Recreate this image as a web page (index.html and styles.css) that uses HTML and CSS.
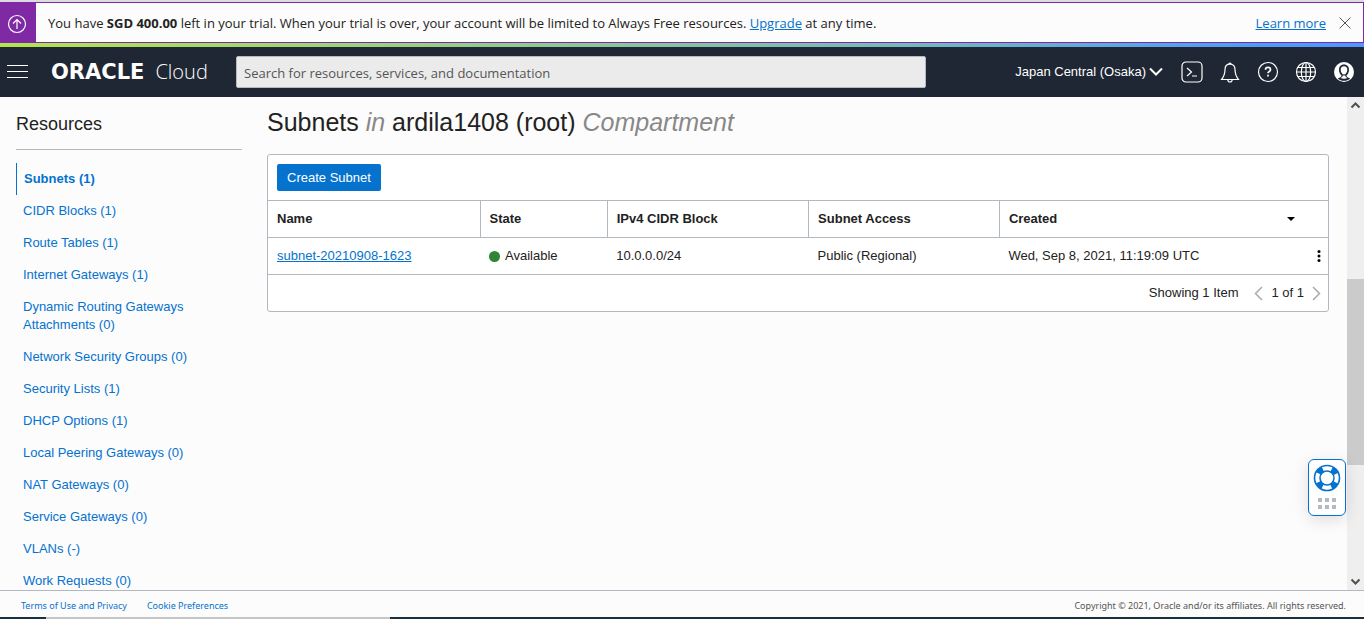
FILE: index.html
```html
<!DOCTYPE html>
<html lang="en">
<head>
<meta charset="utf-8">
<meta name="viewport" content="width=device-width, initial-scale=1">
<title>Subnets - Oracle Cloud</title>
<link rel="stylesheet" href="styles.css">
</head>
<body>
<section class="banner" aria-label="Trial notice">
  <div class="banner-icon">
    <svg width="20" height="20" viewBox="0 0 20 20" fill="none" stroke="currentColor" stroke-width="1.2"><circle cx="10" cy="10" r="8.5"/><path d="M10 15V5.5M6 9.5l4-4 4 4"/></svg>
  </div>
  <p class="banner-text">You have <strong>SGD 400.00</strong> left in your trial. When your trial is over, your account will be limited to Always Free resources. <a href="#">Upgrade</a> at any time.</p>
  <a class="banner-more" href="#">Learn more</a>
  <button class="icon-button close" type="button" aria-label="Close">
    <svg width="12" height="12" viewBox="0 0 12 12" fill="none" stroke="currentColor"><path d="M.5.5l11 11M11.5.5l-11 11"/></svg>
  </button>
</section>

<header class="header">
  <button class="icon-button menu" type="button" aria-label="Menu">
    <svg width="22" height="14" viewBox="0 0 22 14" fill="none" stroke="currentColor"><path d="M0 .5h21M0 6.500h21M0 12.500h21"/></svg>
  </button>
  <a class="logo" href="#"><span class="logo-brand">ORACLE</span><span class="logo-product">Cloud</span></a>
  <input class="search" type="search" placeholder="Search for resources, services, and documentation" aria-label="Search">
  <nav class="tools" aria-label="Tools">
    <button class="region" type="button">Japan Central (Osaka)
      <svg width="14" height="10" viewBox="0 0 14 10" fill="none" stroke="currentColor" stroke-width="2"><path d="M1 1.5l6 6 6-6"/></svg>
    </button>
    <button class="icon-button" type="button" aria-label="Cloud Shell">
      <svg width="22" height="22" viewBox="0 0 22 22" fill="none" stroke="currentColor" stroke-width="1.2"><rect x="1" y="1" width="20" height="20" rx="4"/><path d="M6 7l4.5 4L6 15M11 15h5"/></svg>
    </button>
    <button class="icon-button" type="button" aria-label="Announcements">
      <svg width="22" height="22" viewBox="0 0 22 22" fill="none" stroke="currentColor" stroke-width="1.2"><path d="M9.800 3.200a1.200 1.200 0 1 1 2.400 0M11 3.200C7.500 3.200 6 5.500 6 8.500c0 5-1.500 7.500-3.500 10h17c-2-2.500-3.500-5-3.500-10 0-3-1.500-5.300-5-5.300zM8.800 18.500c0 3.300 4.400 3.300 4.400 0"/></svg>
    </button>
    <button class="icon-button" type="button" aria-label="Help">
      <svg width="22" height="22" viewBox="0 0 22 22" fill="none" stroke="currentColor" stroke-width="1.2"><circle cx="11" cy="11" r="9.500"/><path stroke-width="1.700" d="M8.500 8.700c0-3 5-3 5 0 0 1.700-2.500 1.800-2.500 3.500M11 13.800v1.800"/></svg>
    </button>
    <button class="icon-button" type="button" aria-label="Language">
      <svg width="22" height="22" viewBox="0 0 22 22" fill="none" stroke="currentColor" stroke-width="1.2"><circle cx="11" cy="11" r="9.500"/><ellipse cx="11" cy="11" rx="4.700" ry="9.500"/><path d="M11 1.500v19M1.500 11h19M3 6.500h16M3 15.500h16"/></svg>
    </button>
    <button class="icon-button" type="button" aria-label="Profile">
      <svg width="22" height="22" viewBox="0 0 22 22"><circle cx="11" cy="11" r="10" fill="#fff"/><path fill="#1e2733" d="M11 3.500c-3.400 0-5 2.300-5 5.200 0 2.500 1 4.600 2.600 5.700-.2 1.600-1.900 2.200-3.900 3 3.200 3.200 9.400 3.200 12.600 0-2-.8-3.700-1.400-3.900-3 1.600-1.100 2.600-3.200 2.600-5.700 0-2.900-1.600-5.200-5-5.200z"/><path fill="#fff" d="M11 5.300c2.300 0 3.300 1.400 3.300 3.500 0 2.500-1.500 4.800-3.300 4.800s-3.300-2.300-3.300-4.800c0-2.100 1-3.500 3.300-3.500zM9.800 14.500h2.400c.2 1.200 1 2 2.300 2.600-2 1-5 1-7 0 1.300-.6 2.100-1.400 2.300-2.600z"/></svg>
    </button>
  </nav>
</header>

<div class="workspace">
  <aside class="sidebar">
    <h2>Resources</h2>
    <ul class="resources">
      <li class="active"><a href="#">Subnets (1)</a></li>
      <li><a href="#">CIDR Blocks (1)</a></li>
      <li><a href="#">Route Tables (1)</a></li>
      <li><a href="#">Internet Gateways (1)</a></li>
      <li><a href="#">Dynamic Routing Gateways Attachments (0)</a></li>
      <li><a href="#">Network Security Groups (0)</a></li>
      <li><a href="#">Security Lists (1)</a></li>
      <li><a href="#">DHCP Options (1)</a></li>
      <li><a href="#">Local Peering Gateways (0)</a></li>
      <li><a href="#">NAT Gateways (0)</a></li>
      <li><a href="#">Service Gateways (0)</a></li>
      <li><a href="#">VLANs (-)</a></li>
      <li><a href="#">Work Requests (0)</a></li>
    </ul>
  </aside>

  <main class="content">
    <h1>Subnets <em>in</em> ardila1408 (root) <em>Compartment</em></h1>
    <div class="panel">
      <div class="panel-bar"><button class="primary" type="button">Create Subnet</button></div>
      <table class="subnets">
        <colgroup><col class="col-name"><col class="col-state"><col class="col-cidr"><col class="col-access"><col></colgroup>
        <thead>
          <tr><th>Name</th><th>State</th><th>IPv4 CIDR Block</th><th>Subnet Access</th>
          <th><div class="split sort">Created <svg width="8" height="4" viewBox="0 0 8 4"><path d="M0 0h8L4 4z"/></svg></div></th></tr>
        </thead>
        <tbody>
          <tr><td><a class="link" href="#">subnet-20210908-1623</a></td>
          <td><div class="state"><span class="dot"></span>Available</div></td>
          <td>10.0.0.0/24</td><td>Public (Regional)</td>
          <td><div class="split">Wed, Sep 8, 2021, 11:19:09 UTC
            <button class="icon-button" type="button" aria-label="Actions"><svg width="4" height="12" viewBox="0 0 4 12"><circle cx="2" cy="1.500" r="1.500"/><circle cx="2" cy="6" r="1.500"/><circle cx="2" cy="10.500" r="1.500"/></svg></button></div></td></tr>
        </tbody>
      </table>
      <div class="pager">
        <span class="count">Showing 1 Item</span>
        <button class="icon-button" type="button" aria-label="Previous page"><svg width="9" height="15" viewBox="0 0 9 15" fill="none" stroke="currentColor" stroke-width="1.500"><path d="M8 1L1.500 7.500 8 14"/></svg></button>
        <span>1 of 1</span>
        <button class="icon-button" type="button" aria-label="Next page"><svg width="9" height="15" viewBox="0 0 9 15" fill="none" stroke="currentColor" stroke-width="1.500"><path d="M1 1l6.500 6.500L1 14"/></svg></button>
      </div>
    </div>
  </main>

  <div class="scrollbar">
    <svg width="17" height="17" viewBox="0 0 17 17" fill="none" stroke="#505050" stroke-width="2"><path d="M4.500 10.500l4-4 4 4"/></svg>
    <div class="track"><div class="thumb"></div></div>
    <svg width="17" height="17" viewBox="0 0 17 17" fill="none" stroke="#505050" stroke-width="2"><path d="M4.500 6.500l4 4 4-4"/></svg>
  </div>

  <button class="support" type="button" aria-label="Support">
    <svg width="28" height="28" viewBox="0 0 28 28" fill="none" stroke="#0572ce"><circle cx="14" cy="14" r="9.700" stroke-width="6" stroke-dasharray="6.240 9" stroke-dashoffset="-4.500"/><circle cx="14" cy="14" r="12.500" stroke-width="1.600"/><circle cx="14" cy="14" r="7" stroke-width="1.500"/></svg>
    <svg width="18" height="11" viewBox="0 0 18 11" fill="#b4bac1"><path d="M0 0h4v4H0zM7 0h4v4H7zM14 0h4v4h-4zM0 7h4v4H0zM7 7h4v4H7zM14 7h4v4h-4z"/></svg>
  </button>
</div>

<footer class="footer">
  <a href="#">Terms of Use and Privacy</a>
  <a href="#">Cookie Preferences</a>
  <span>Copyright © 2021, Oracle and/or its affiliates. All rights reserved.</span>
</footer>
<div class="taskbar"><span></span></div>
</body>
</html>
```
FILE: styles.css
```css
* { box-sizing: border-box; }

body {
  margin: 0;
  height: 100vh;
  display: flex;
  flex-direction: column;
  overflow: hidden;
  background: #fcfcfc;
  border-top: 2px solid #dcdce0;
  color: #222;
  font: 13px/18px "Liberation Sans", Arial, sans-serif;
}

a { color: #0572ce; }
svg { display: block; flex: none; }
button { font: inherit; color: inherit; cursor: pointer; }

.icon-button {
  display: flex;
  padding: 0;
  border: 0;
  background: none;
}

.banner {
  flex: none;
  display: flex;
  align-items: center;
  height: 41px;
  padding-right: 12px;
  border: 1px solid #8029a5;
  border-left: 0;
  font: 13px/18px "Open Sans", sans-serif;
}

.banner-icon {
  align-self: stretch;
  display: flex;
  align-items: center;
  width: 36px;
  padding: 2px 0 0 7px;
  background: #8029a5;
  color: #fff;
}

.banner-text { flex: 1; margin: 0 12px; }
.close { margin-left: 13px; color: #555; }

.header {
  flex: none;
  display: flex;
  align-items: center;
  height: 54px;
  padding: 0 9px 0 7px;
  border-top: 4px solid;
  border-image: linear-gradient(90deg, #b4e54b, #74b9bc 66%, #4f9cf7 92%, #4f96ff) 1;
  background: #1e2733;
  color: #fff;
}

.menu { margin-right: 22px; }

.logo {
  display: flex;
  align-items: center;
  gap: 11px;
  width: 185px;
  color: #fff;
  text-decoration: none;
}

.logo-brand { font: bold 21px/24px "DejaVu Sans", sans-serif; }
.logo-product { font: 300 20px/24px "Open Sans", sans-serif; }

.search {
  width: 690px;
  height: 32px;
  padding: 2px 7px 0;
  border: 1px solid #b4bac4;
  border-radius: 2px;
  background: #ebebeb;
  font: 13px/18px "Open Sans", sans-serif;
}

.search::placeholder { color: #555; opacity: 1; }

.tools {
  flex: 1;
  display: flex;
  justify-content: flex-end;
  align-items: center;
  gap: 16px;
}

.region {
  display: flex;
  align-items: center;
  gap: 3px;
  padding: 0;
  margin-right: 2px;
  border: 0;
  background: none;
}

.workspace {
  flex: 1;
  min-height: 0;
  position: relative;
  display: flex;
  overflow: hidden;
}

.sidebar { width: 267px; flex: none; padding: 15px 25px 0 16px; }

.sidebar h2 {
  margin: 0 0 13px;
  padding-bottom: 13px;
  border-bottom: 1px solid #b1b8c1;
  font-weight: 400;
  font-size: 18px;
  line-height: 24px;
}

.resources { margin: 0; padding: 0; list-style: none; }
.resources li { padding: 7px 50px 7px 7px; }
.resources a { text-decoration: none; }
.resources .active { border-left: 1px solid #0572ce; font-weight: 700; }

.content { flex: 1; padding: 9px 18px 0 0; }

h1 {
  margin: 0 0 16px;
  font-weight: 400;
  font-size: 25px;
  line-height: 32px;
}

h1 em { color: #888; }

.panel {
  border: 1px solid #b1b8c1;
  border-radius: 3px;
  background: #fff;
}

.panel-bar { padding: 9px; }

.primary {
  display: block;
  padding: 5px 10px 4px;
  border: 0;
  border-radius: 2px;
  background: #0572ce;
  color: #fff;
}

.subnets {
  width: 100%;
  table-layout: fixed;
  border-collapse: collapse;
}

.col-name { width: 20%; }
.col-state { width: 12%; }
.col-cidr { width: 19%; }
.col-access { width: 18%; }

.subnets th,
.subnets td {
  height: 37px;
  padding: 0 9px;
  border: solid #b1b8c1;
  border-width: 1px 0;
  text-align: left;
}

.subnets th + th { border-left-width: 1px; }

.split { display: flex; justify-content: space-between; align-items: center; }
.split .icon-button { margin-right: -2px; }
.sort { padding-right: 24px; }
.state { display: flex; align-items: center; gap: 5px; }
.dot { width: 11px; height: 11px; border-radius: 50%; background: #2f8535; }

.pager {
  display: flex;
  justify-content: flex-end;
  align-items: center;
  gap: 8px;
  height: 36px;
  padding-right: 7px;
}

.pager .icon-button { color: #aaa; }
.count { margin-right: 8px; }

.scrollbar {
  flex: none;
  display: flex;
  flex-direction: column;
  width: 17px;
  background: #efefef;
}

.track { flex: 1; padding-top: 165px; }
.thumb { height: 186px; background: #cbcbcb; }

.support {
  position: absolute;
  right: 18px;
  bottom: 74px;
  display: flex;
  flex-direction: column;
  align-items: center;
  gap: 6px;
  width: 38px;
  padding: 4px 0 6px;
  border: 1px solid #0572ce;
  border-radius: 6px;
  background: #fff;
  box-shadow: 0 4px 16px rgba(0, 0, 0, .12);
}

.footer {
  flex: none;
  display: flex;
  align-items: center;
  gap: 20px;
  height: 27px;
  padding: 3px 18px 0 21px;
  border-top: 1px solid #b1b8c1;
  color: #555;
  font: 9px/14px "Noto Sans", sans-serif;
}

.footer a { text-decoration: none; }
.footer span { margin-left: auto; }

.taskbar { flex: none; height: 2px; padding-left: 46px; background: #1c2f3c; }
.taskbar span { display: block; width: 344px; height: 2px; background: #c5c7c7; }
```
